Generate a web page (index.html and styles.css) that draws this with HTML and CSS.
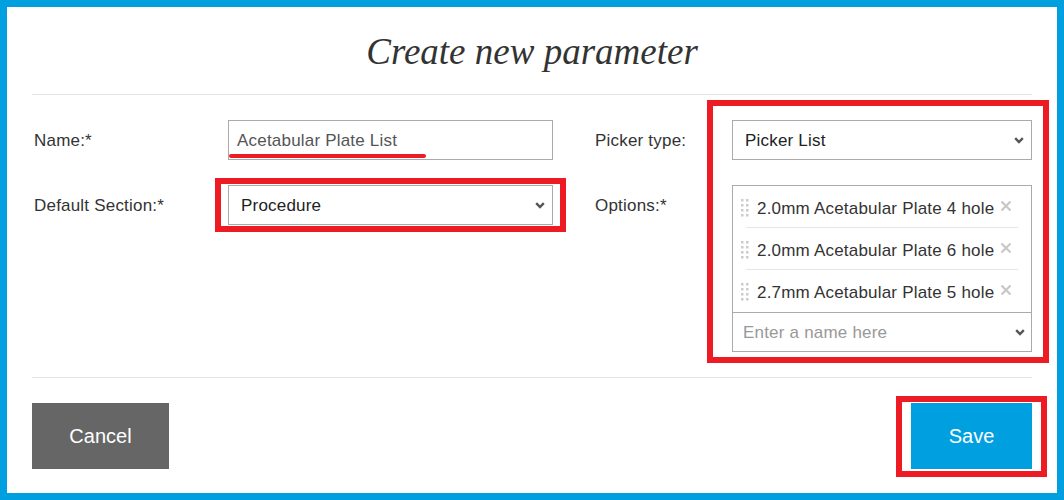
FILE: index.html
```html
<!DOCTYPE html>
<html lang="en">
<head>
<meta charset="utf-8">
<title>Create new parameter</title>
<link rel="stylesheet" href="styles.css">
</head>
<body>
<div class="frame">
  <div class="dialog">
    <h1 class="title">Create new parameter</h1>
    <div class="form">
      <div class="left-half">
        <label class="lbl">Name:*</label>
        <div class="field">
          <div class="input">Acetabular Plate List</div>
          <span class="mark-underline"></span>
        </div>
        <label class="lbl">Default Section:*</label>
        <div class="field">
          <div class="select">
            <span>Procedure</span>
            <svg class="chev" width="10" height="7" viewBox="0 0 10 7"><path d="M1.2 1.2 L5 5 L8.8 1.2" fill="none" stroke="#555" stroke-width="2.4"/></svg>
          </div>
          <span class="mark-box mark-section"></span>
        </div>
      </div>
      <div class="right-half">
        <div class="lbl-col">
          <label class="lbl">Picker type:</label>
          <label class="lbl">Options:*</label>
        </div>
        <div class="field-col">
          <div class="select">
            <span>Picker List</span>
            <svg class="chev" width="10" height="7" viewBox="0 0 10 7"><path d="M1.2 1.2 L5 5 L8.8 1.2" fill="none" stroke="#555" stroke-width="2.4"/></svg>
          </div>
          <div class="options">
            <ul class="opt-list">
              <li class="opt">
                <svg class="handle" width="8" height="18" viewBox="0 0 8 18"><g fill="#ccc"><rect x="0" y="0" width="2.5" height="2.5"/><rect x="5" y="0" width="2.5" height="2.5"/><rect x="0" y="5" width="2.5" height="2.5"/><rect x="5" y="5" width="2.5" height="2.5"/><rect x="0" y="10" width="2.5" height="2.5"/><rect x="5" y="10" width="2.5" height="2.5"/><rect x="0" y="15" width="2.5" height="2.5"/><rect x="5" y="15" width="2.5" height="2.5"/></g></svg>
                <span class="opt-text">2.0mm Acetabular Plate 4 hole</span>
                <svg class="close" width="12" height="12" viewBox="0 0 12 12"><path d="M1.5 1.5 L10.5 10.5 M10.5 1.5 L1.5 10.5" stroke="#c8c8c8" stroke-width="2.2"/></svg>
              </li>
              <li class="opt">
                <svg class="handle" width="8" height="18" viewBox="0 0 8 18"><g fill="#ccc"><rect x="0" y="0" width="2.5" height="2.5"/><rect x="5" y="0" width="2.5" height="2.5"/><rect x="0" y="5" width="2.5" height="2.5"/><rect x="5" y="5" width="2.5" height="2.5"/><rect x="0" y="10" width="2.5" height="2.5"/><rect x="5" y="10" width="2.5" height="2.5"/><rect x="0" y="15" width="2.5" height="2.5"/><rect x="5" y="15" width="2.5" height="2.5"/></g></svg>
                <span class="opt-text">2.0mm Acetabular Plate 6 hole</span>
                <svg class="close" width="12" height="12" viewBox="0 0 12 12"><path d="M1.5 1.5 L10.5 10.5 M10.5 1.5 L1.5 10.5" stroke="#c8c8c8" stroke-width="2.2"/></svg>
              </li>
              <li class="opt">
                <svg class="handle" width="8" height="18" viewBox="0 0 8 18"><g fill="#ccc"><rect x="0" y="0" width="2.5" height="2.5"/><rect x="5" y="0" width="2.5" height="2.5"/><rect x="0" y="5" width="2.5" height="2.5"/><rect x="5" y="5" width="2.5" height="2.5"/><rect x="0" y="10" width="2.5" height="2.5"/><rect x="5" y="10" width="2.5" height="2.5"/><rect x="0" y="15" width="2.5" height="2.5"/><rect x="5" y="15" width="2.5" height="2.5"/></g></svg>
                <span class="opt-text">2.7mm Acetabular Plate 5 hole</span>
                <svg class="close" width="12" height="12" viewBox="0 0 12 12"><path d="M1.5 1.5 L10.5 10.5 M10.5 1.5 L1.5 10.5" stroke="#c8c8c8" stroke-width="2.2"/></svg>
              </li>
            </ul>
            <div class="opt-input">
              <span class="placeholder">Enter a name here</span>
              <svg class="chev" width="10" height="7" viewBox="0 0 10 7"><path d="M1.2 1.2 L5 5 L8.8 1.2" fill="none" stroke="#555" stroke-width="2.4"/></svg>
            </div>
          </div>
          <span class="mark-box mark-right"></span>
        </div>
      </div>
    </div>
    <div class="footer">
      <button class="btn btn-cancel">Cancel</button>
      <div class="save-wrap">
        <button class="btn btn-save">Save</button>
        <span class="mark-box mark-save"></span>
      </div>
    </div>
  </div>
</div>
</body>
</html>
```

FILE: styles.css
```css
* { box-sizing: border-box; }
html, body { margin: 0; padding: 0; }
body {
  width: 1064px;
  height: 500px;
  overflow: hidden;
  font-family: "Liberation Sans", Arial, sans-serif;
  color: #333;
  background: #fff;
}
.frame {
  width: 1064px;
  height: 500px;
  border: 7px solid #009fe0;
  background: #fff;
}
.dialog {
  padding: 0 25px;
}
.title {
  margin: 0;
  height: 88px;
  border-bottom: 1px solid #e2e2e2;
  font-family: "Liberation Serif", "Times New Roman", serif;
  font-style: italic;
  font-weight: normal;
  font-size: 37px;
  color: #333;
  text-align: center;
  padding-top: 25px;
  line-height: 40px;
}
.form {
  display: flex;
  align-items: flex-start;
  padding: 25px 0;
  border-bottom: 1px solid #e2e2e2;
}
.left-half {
  display: grid;
  grid-template-columns: 196px 325px;
  row-gap: 25px;
  align-items: start;
  margin-right: 28px;
}
.right-half {
  display: flex;
  align-items: flex-start;
}
.lbl-col {
  width: 151px;
  padding-left: 12px;
  display: flex;
  flex-direction: column;
  gap: 25px;
}
.field-col {
  width: 300px;
  display: flex;
  flex-direction: column;
  gap: 25px;
  position: relative;
}
.lbl {
  font-size: 17px;
  letter-spacing: 0.2px;
  line-height: 40px;
  height: 40px;
  padding-left: 2px;
  padding-top: 1px;
  color: #333;
}
.field { position: relative; }
.input {
  height: 40px;
  border: 1px solid #aaa;
  padding: 1px 8px 0;
  font-size: 17px;
  letter-spacing: 0.2px;
  line-height: 38px;
  color: #555;
}
.select {
  height: 40px;
  border: 1px solid #aaa;
  padding: 1px 7px 0 12px;
  font-size: 17px;
  letter-spacing: 0.2px;
  color: #222;
  display: flex;
  align-items: center;
  justify-content: space-between;
}
.chev { display: block; }
.options {
  border: 1px solid #aaa;
}
.opt-list {
  list-style: none;
  margin: 0;
  padding: 0;
}
.opt {
  height: 42px;
  margin: 0 13px;
  border-bottom: 1px solid #e6e6e6;
  display: flex;
  align-items: flex-start;
  padding-top: 13px;
}
.opt:last-child { border-bottom: none; }
.handle {
  margin-left: -5px;
  margin-top: 0;
  flex: none;
}
.opt-text {
  margin-left: 8px;
  font-size: 17px;
  letter-spacing: 0.2px;
  line-height: 20px;
  color: #333;
  white-space: nowrap;
}
.close {
  margin-left: 6px;
  margin-top: 1px;
  flex: none;
}
.opt-input {
  height: 39px;
  border-top: 1px solid #aaa;
  display: flex;
  align-items: center;
  justify-content: space-between;
  padding: 1px 6px 0 10px;
}
.placeholder {
  font-size: 17px;
  letter-spacing: 0.2px;
  color: #999;
}
.footer {
  display: flex;
  justify-content: space-between;
  padding-top: 25px;
}
.btn {
  height: 66px;
  border: none;
  font-family: "Liberation Sans", Arial, sans-serif;
  font-size: 20px;
  color: #fff;
  cursor: pointer;
}
.btn-cancel {
  width: 137px;
  background: #666;
}
.btn-save {
  width: 121px;
  background: #009fe0;
  display: block;
}
.save-wrap { position: relative; }

/* annotation overlays */
.mark-box {
  position: absolute;
  border: 6px solid #ed1c24;
  pointer-events: none;
}
.mark-section { left: -13px; right: -13px; top: -7px; bottom: -7px; }
.mark-right { left: -25px; right: -17px; top: -20px; bottom: -11px; }
.mark-save { left: -15px; right: -15px; top: -7px; bottom: -8px; }
.mark-underline {
  position: absolute;
  left: 1px;
  top: 34px;
  width: 197px;
  height: 4px;
  border-radius: 2px;
  background: #ed1c24;
}
```
